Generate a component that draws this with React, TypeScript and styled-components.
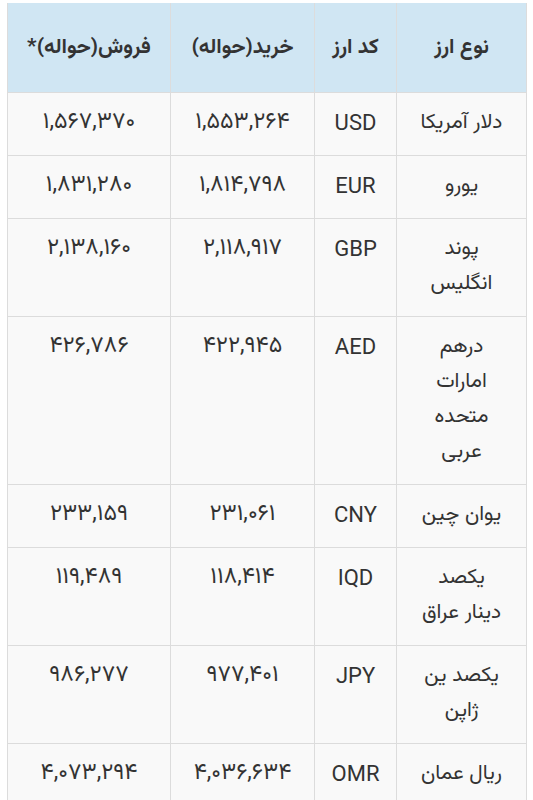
import styled, { createGlobalStyle } from 'styled-components';

interface Rate {
    name: string[]; //lines of the currency name
    code: string;
    buy: string;
    sell: string;
}

const rates: Rate[] = [
    { name: ['دلار آمریکا'], code: 'USD', buy: '۱,۵۵۳,۲۶۴', sell: '۱,۵۶۷,۳۷۰' },
    { name: ['یورو'], code: 'EUR', buy: '۱,۸۱۴,۷۹۸', sell: '۱,۸۳۱,۲۸۰' },
    { name: ['پوند', 'انگلیس'], code: 'GBP', buy: '۲,۱۱۸,۹۱۷', sell: '۲,۱۳۸,۱۶۰' },
    { name: ['درهم', 'امارات', 'متحده', 'عربی'], code: 'AED', buy: '۴۲۲,۹۴۵', sell: '۴۲۶,۷۸۶' },
    { name: ['یوان چین'], code: 'CNY', buy: '۲۳۱,۰۶۱', sell: '۲۳۳,۱۵۹' },
    { name: ['یکصد', 'دینار عراق'], code: 'IQD', buy: '۱۱۸,۴۱۴', sell: '۱۱۹,۴۸۹' },
    { name: ['یکصد ین', 'ژاپن'], code: 'JPY', buy: '۹۷۷,۴۰۱', sell: '۹۸۶,۲۷۷' },
    { name: ['ریال عمان'], code: 'OMR', buy: '۴,۰۳۶,۶۳۴', sell: '۴,۰۷۳,۲۹۴' },
];

const GlobalStyle = createGlobalStyle`
  html, body {
    margin: 0;
    padding: 0;
    background: #ffffff;
  }
  body {
    font-family: "Vazirmatn", "Noto Sans Arabic", "DejaVu Sans", Roboto, sans-serif;
    color: #333333;
  }
`;

const Page = styled.div`
  padding: 3px 6px 0 8px;
  direction: rtl;
`;

const RateTable = styled.table`
  width: 519px;
  border-collapse: collapse;
  table-layout: fixed;
  background: #f9f9f9;
`;

const HeadCell = styled.th`
  background: #d0e6f3;
  height: 89px;
  padding: 0 4px;
  font-size: 21px;
  font-weight: 700;
  color: #333;
  text-align: center;
  vertical-align: middle;
  border: 1px solid #dcdcdc;
  border-top: none;
`;

type CellKind = 'name' | 'code' | 'number';

const Cell = styled.td<{ $kind: CellKind }>`
  padding: 12px 6px 15px;
  line-height: 35px;
  text-align: center;
  vertical-align: top;
  border: 1px solid #dcdcdc;
  font-family: ${(p) => (p.$kind === 'code' ? 'Roboto, "Noto Sans", sans-serif' : 'inherit')};
  font-size: ${(p) => (p.$kind === 'number' ? '23px' : p.$kind === 'code' ? '22px' : '21px')};
  color: #333;
`;

const NameLine = styled.div`
  white-space: nowrap;
`;

export default function App() {
    return (
        <>
            <GlobalStyle />
            <Page>
                <RateTable>
                    <colgroup>
                        <col style={{ width: 130 }} />
                        <col style={{ width: 82 }} />
                        <col style={{ width: 144 }} />
                        <col style={{ width: 163 }} />
                    </colgroup>
                    <thead>
                        <tr>
                            <HeadCell>نوع ارز</HeadCell>
                            <HeadCell>کد ارز</HeadCell>
                            <HeadCell>خرید(حواله)</HeadCell>
                            <HeadCell>فروش(حواله)*</HeadCell>
                        </tr>
                    </thead>
                    <tbody>
                        {rates.map((rate) => (
                            <tr key={rate.code}>
                                <Cell $kind="name">
                                    {rate.name.map((line) => (
                                        <NameLine key={line}>{line}</NameLine>
                                    ))}
                                </Cell>
                                <Cell $kind="code">{rate.code}</Cell>
                                <Cell $kind="number">{rate.buy}</Cell>
                                <Cell $kind="number">{rate.sell}</Cell>
                            </tr>
                        ))}
                    </tbody>
                </RateTable>
            </Page>
        </>
    );
}
